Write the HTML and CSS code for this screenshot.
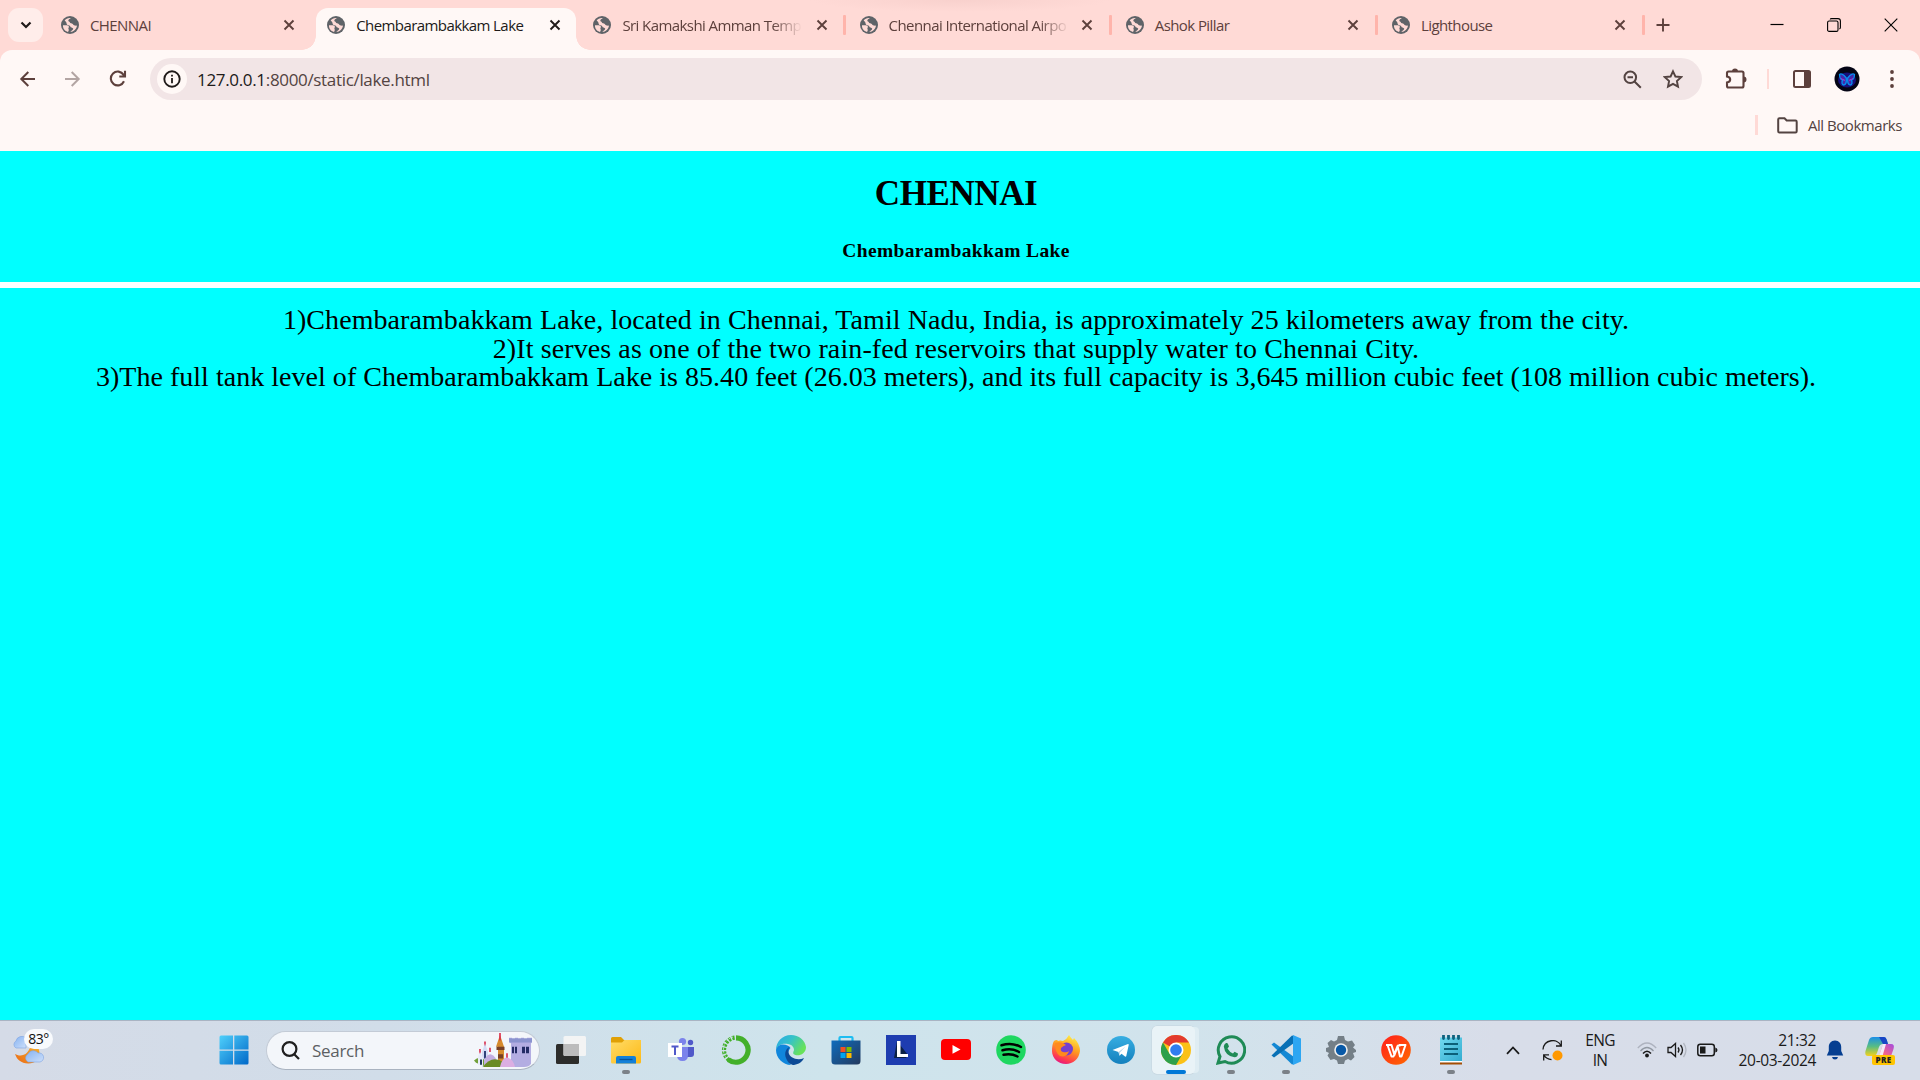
FILE: index.html
```html
<!DOCTYPE html>
<html lang="en">
<head>
<meta charset="utf-8">
<title>Chembarambakkam Lake</title>
<link rel="stylesheet" href="styles.css">
</head>
<body>
<svg class="defs" width="0" height="0">
  <defs>
    <symbol id="globe" viewBox="0 0 18 18"><circle cx="9" cy="9" r="9" fill="#5f6368"/><path d="M2 9.2C4.500 9.300 7 8.800 7.800 10.200C8.300 11.700 6.800 12 7.600 13.200C8.200 14.300 7.300 15.200 7 15.900C4 15.200 1.700 12.500 2 9.200ZM9.800 2.200C8.500 3 7.300 3.400 7.300 4.600C7.400 5.800 8.500 5.300 8.800 6.300C9 7.700 10.900 7 11.800 8C12.500 9 13.500 9.800 16 9.600C15.700 13.200 12.700 16 9.300 16C10.500 14.500 12.300 14.400 12.200 12.600C11.500 11.500 9.600 12 9.300 10.600C9.200 9.300 8 9.200 6.500 8.900C5.300 8.300 5.800 6.700 4.900 5.800C4.400 5.300 3.900 5 3.600 4.600C5 2.800 7.300 1.800 9.800 2.200Z" fill="#ffdad6"/></symbol>
    <symbol id="x" viewBox="0 0 12 12"><path d="M1.500 1.500L10.500 10.500M10.500 1.500L1.500 10.500" fill="none" stroke="currentColor" stroke-width="1.900"/></symbol>
    <linearGradient id="win" x1="0" y1="0" x2="1" y2="1"><stop offset="0" stop-color="#4fd0fb"/><stop offset="1" stop-color="#0068c8"/></linearGradient>
    <linearGradient id="fold" x1="0" y1="0" x2="1" y2="1"><stop offset="0" stop-color="#ffdc68"/><stop offset="1" stop-color="#fdb915"/></linearGradient>
    <linearGradient id="edgeTop" x1="0" y1="0" x2="1" y2=".5"><stop offset="0" stop-color="#2aa9e8"/><stop offset=".5" stop-color="#35c2c8"/><stop offset="1" stop-color="#68e25a"/></linearGradient>
    <linearGradient id="store" x1="0" y1="0" x2="1" y2="1"><stop offset="0" stop-color="#0f6cbd"/><stop offset="1" stop-color="#243a5e"/></linearGradient>
    <linearGradient id="fox" x1=".7" y1="0" x2=".3" y2="1"><stop offset="0" stop-color="#fff14a"/><stop offset=".45" stop-color="#ff9a1f"/><stop offset=".8" stop-color="#ff3d4d"/><stop offset="1" stop-color="#e31587"/></linearGradient>
    <linearGradient id="tg" x1="0" y1="0" x2="0" y2="1"><stop offset="0" stop-color="#37aee2"/><stop offset="1" stop-color="#1480bd"/></linearGradient>
    <linearGradient id="wps" x1="0" y1="0" x2="1" y2="1"><stop offset="0" stop-color="#ff1d1d"/><stop offset="1" stop-color="#ff6a00"/></linearGradient>
    <linearGradient id="note" x1="0" y1="0" x2="1" y2="1"><stop offset="0" stop-color="#72daf0"/><stop offset="1" stop-color="#33acd0"/></linearGradient>
    <linearGradient id="cloud" x1="0" y1="0" x2="1" y2="1"><stop offset="0" stop-color="#86b3f2"/><stop offset="1" stop-color="#cddffa"/></linearGradient>
    <linearGradient id="cop1" x1="0" y1="0" x2="0" y2="1"><stop offset="0" stop-color="#1b8fe8"/><stop offset=".5" stop-color="#58bd83"/><stop offset="1" stop-color="#f5d21c"/></linearGradient>
    <linearGradient id="cop2" x1="1" y1="0" x2="0" y2="1"><stop offset="0" stop-color="#a34be0"/><stop offset=".6" stop-color="#f2648c"/><stop offset="1" stop-color="#ff9b50"/></linearGradient>
    <linearGradient id="moon" x1="1" y1="0" x2="0" y2="1"><stop offset="0" stop-color="#f9b82c"/><stop offset="1" stop-color="#ea6a16"/></linearGradient>
  </defs>
</svg>

<header class="tabstrip">
  <button class="tab-search"><svg width="12" height="8" viewBox="0 0 12 8"><path d="M1.500 1.500L6 6L10.500 1.500" fill="none" stroke="#201a19" stroke-width="2.200"/></svg></button>
  <div class="tab"><svg class="fav"><use href="#globe"/></svg><span class="title">CHENNAI</span><svg class="close"><use href="#x"/></svg></div>
  <div class="tab active"><svg class="fav"><use href="#globe"/></svg><span class="title">Chembarambakkam Lake</span><svg class="close"><use href="#x"/></svg></div>
  <div class="tab sep"><svg class="fav"><use href="#globe"/></svg><span class="title fade">Sri Kamakshi Amman Temp</span><svg class="close"><use href="#x"/></svg></div>
  <div class="tab sep"><svg class="fav"><use href="#globe"/></svg><span class="title fade">Chennai International Airpo</span><svg class="close"><use href="#x"/></svg></div>
  <div class="tab sep"><svg class="fav"><use href="#globe"/></svg><span class="title">Ashok Pillar</span><svg class="close"><use href="#x"/></svg></div>
  <div class="tab sep"><svg class="fav"><use href="#globe"/></svg><span class="title">Lighthouse</span><svg class="close"><use href="#x"/></svg></div>
  <svg class="plus" width="14" height="14" viewBox="0 0 14 14"><path d="M7 .5V13.500M.5 7H13.500" stroke="#5d403c" stroke-width="1.900"/></svg>
  <div class="window-buttons">
    <svg width="14" height="14" viewBox="0 0 14 14"><path d="M.5 6.500H13.500" stroke="#000" stroke-width="1.200"/></svg>
    <svg width="14" height="14" viewBox="0 0 14 14" fill="none" stroke="#000" stroke-width="1.100"><rect x=".6" y="3" width="10.400" height="10.400" rx="1.500"/><path d="M3.200 1.500Q3.400 .6 4.500 .6H11Q13.400 .6 13.400 3V9.500Q13.400 10.600 12.400 10.900"/></svg>
    <svg width="14" height="14" viewBox="0 0 14 14"><path d="M.7 .7L13.300 13.300M13.300 .7L.7 13.300" stroke="#000" stroke-width="1.100"/></svg>
  </div>
</header>

<nav class="toolbar">
  <svg class="back" width="18" height="18" viewBox="0 0 18 18"><path d="M16 9H2.500M9.300 2L2.300 9L9.300 16" fill="none" stroke="#5d403c" stroke-width="2"/></svg>
  <svg class="forward" width="18" height="18" viewBox="0 0 18 18"><path d="M1 9H14.500M7.700 2L14.700 9L7.700 16" fill="none" stroke="#b3a5a3" stroke-width="2"/></svg>
  <svg class="reload" width="18" height="18" viewBox="0 0 18 18"><path d="M15 11.300A6.900 6.900 0 1 1 14.600 4.900L16 6.500M16 .8V6.500H10.300" fill="none" stroke="#5d403c" stroke-width="2.100"/></svg>
  <div class="omnibox">
    <span class="info"><svg width="18" height="18" viewBox="0 0 18 18"><circle cx="9" cy="9" r="7.700" fill="none" stroke="#201a19" stroke-width="1.900"/><path d="M9 8V13.200M9 4.800V6.600" stroke="#201a19" stroke-width="1.800"/></svg></span>
    <span class="url"><span class="host">127.0.0.1</span>:8000/static/lake.html</span>
    <svg class="lens" width="19" height="19" viewBox="0 0 19 19" fill="none" stroke="#534341" stroke-width="2"><circle cx="7.300" cy="7.300" r="5.800"/><path d="M11.500 11.500L17.800 17.800M4.500 7.300H10"/></svg>
    <svg width="20" height="20" viewBox="0 0 20 20"><path d="M10 2.300L12.400 7.500L18.100 8.100L13.900 12L15 17.600L10 14.800L5 17.600L6.100 12L1.900 8.100L7.600 7.500Z" fill="none" stroke="#534341" stroke-width="1.900"/></svg>
  </div>
  <svg class="puzzle" width="22" height="22" viewBox="0 0 22 22"><path d="M3.500 3.500H17Q18.500 3.500 18.500 5V18Q18.500 19.500 17 19.500H3.500Q2 19.500 2 18V14.500Q5.200 14 5.200 11.500T2 8.500V5Q2 3.500 3.500 3.500Z" fill="none" stroke="#5d403c" stroke-width="2.100"/><path d="M7 3.500A3 3 0 0 1 13 3.500ZM18.500 8.500A3 3 0 0 1 18.500 14.500Z" fill="#5d403c"/></svg>
  <i class="rule"></i>
  <svg class="panel" width="18" height="18" viewBox="0 0 18 18"><rect x="1" y="1" width="16" height="16" rx="1.500" fill="none" stroke="#5d403c" stroke-width="2"/><path d="M11 1H17V17H11Z" fill="#5d403c"/></svg>
  <svg class="avatar" width="26" height="26" viewBox="0 0 26 26"><circle cx="13" cy="13" r="12.500" fill="#040414"/><ellipse cx="13" cy="14" rx="9" ry="7.500" fill="#17107a"/><path d="M12.300 12C9 7.500 6.500 7.500 5.500 8.500C5.600 12 7 14 9 14C7 16 8 19 10 19C11.500 18.500 12.300 17 12.300 15ZM13.700 12C17 7.500 19.500 7.500 20.500 8.500C20.400 12 19 14 17 14C19 16 18 19 16 19C14.500 18.500 13.700 17 13.700 15Z" fill="#4528aa" stroke="#078ff0" stroke-width="1.300"/><path d="M7 12.500L11 14.500M19 12.500L15 14.500" stroke="#b32bc6"/></svg>
  <svg width="4" height="18" viewBox="0 0 4 18" fill="#5d403c"><circle cx="2" cy="2" r="1.900"/><circle cx="2" cy="9" r="1.900"/><circle cx="2" cy="16" r="1.900"/></svg>
</nav>

<div class="bookmarks">
  <i class="rule"></i>
  <svg width="21" height="17" viewBox="0 0 21 17"><path d="M2.500 1.200H7.500L9.700 3.500H18.500Q19.700 3.500 19.700 4.800V14.200Q19.700 15.600 18.500 15.600H2.500Q1.200 15.600 1.200 14.200V2.500Q1.200 1.200 2.500 1.200Z" fill="none" stroke="#534341" stroke-width="2"/></svg>
  <span>All Bookmarks</span>
</div>

<main class="page">
  <div class="masthead">
    <h1>CHENNAI</h1>
    <h3>Chembarambakkam Lake</h3>
  </div>
  <div class="facts">
    <p class="distance">1)Chembarambakkam Lake, located in Chennai, Tamil Nadu, India, is approximately 25 kilometers away from the city.</p>
    <p class="supply">2)It serves as one of the two rain-fed reservoirs that supply water to Chennai City.</p>
    <p class="capacity">3)The full tank level of Chembarambakkam Lake is 85.40 feet (26.03 meters), and its full capacity is 3,645 million cubic feet (108 million cubic meters).</p>
  </div>
</main>

<footer class="taskbar">
  <div class="weather">
    <svg width="34" height="34" viewBox="0 0 34 34"><path d="M3 21C8 24 17 24 20 8C31 14 30 31 16 30.500C9 30 5 27 3 21Z" fill="url(#moon)"/><path d="M4 15A4 4 0 0 1 4 8A6 6 0 0 1 14 5V15Z" fill="url(#cloud)" stroke="#7fa5e0" stroke-width=".6"/><path d="M16 29A4.500 4.500 0 0 1 16 21A6 6 0 0 1 26 20A4.500 4.500 0 0 1 28 29Z" fill="url(#cloud)" stroke="#7fa5e0" stroke-width=".6"/></svg>
    <span class="temp">83°</span>
  </div>
  <svg class="start" width="30" height="30" viewBox="0 0 30 30" fill="url(#win)"><path d="M2 .5H14V14.500H.5V2Q.5 .5 2 .5ZM15.300 .5H28Q29.500 .5 29.500 2V14.500H15.300ZM.5 15.700H14V29.500H2Q.5 29.500 .5 28ZM15.300 15.700H29.500V28Q29.500 29.500 28 29.500H15.300Z"/></svg>
  <div class="search">
    <svg width="19" height="19" viewBox="0 0 19 19" fill="none" stroke="#1f1f1f" stroke-width="2.200"><circle cx="8.500" cy="8" r="6.900"/><path d="M13 13L18 18"/></svg>
    <span>Search</span>
    <svg class="castle" width="60" height="35" viewBox="0 0 60 33" preserveAspectRatio="none"><path d="M35 8V4.500H38V7H41V4.500H44V7H47V4.500H50V7H53V4.500H58V8L57 10V29Q55 32 50 32H37V10Z" fill="#b3ade2"/><path d="M35 5H58V9H35Z" fill="#8b94cf"/><path d="M38 13h2v6h-2zM41 13h2v6h-2zM48 13h3v6h-3zM52 13h3v6h-3z" fill="#232c66"/><path d="M24 32V13H22L26 2L30 13V32Z" fill="#d58a2c"/><path d="M22.500 13H30.500V16H22.500ZM24 20H29V24H24Z" fill="#774025"/><path d="M26 0V7M11 8V14M16 14V18M6 15V20M33 19V24" stroke="#d92b4a" stroke-width="1.600"/><path d="M8 32V18L11 10L14 18V32Z" fill="#d4dcf5"/><path d="M10 17h2v7h-2z" fill="#304278"/><path d="M0 26Q5 21 10 25V31L2 28Z" fill="#72a03a"/><path d="M10 32V26Q16 14 23 26V32Z" fill="#c3aee0"/><path d="M9 32Q18 20 30 28V32Z" fill="#698b24"/><path d="M26 32Q28 23 33 23Q39 24 41 32Z" fill="#dbaee2"/><path d="M4 30V22L6 18L9 23V31Z" fill="#e8ecfa"/><path d="M6 25h2v5h-2z" fill="#1e355e"/></svg>
  </div>
  <div class="apps">
    <div class="app"><svg viewBox="0 0 30 30"><rect x="0" y="9" width="23" height="20" rx="1.500" fill="#2d2d2b"/><rect x="7.500" y="1" width="22.500" height="20" rx="1.500" fill="#f4f4f4" opacity=".95"/><path d="M7.500 9H23V21H9Q7.500 21 7.500 19.500Z" fill="#bcbcbc"/></svg></div>
    <div class="app run"><svg viewBox="0 0 30 30"><path d="M0 3.500Q0 2 1.500 2H10L13 5H30V12H0Z" fill="#e0a006"/><path d="M0 7.500H11L13.500 5H30V27Q30 28.500 28.500 28.500H1.500Q0 28.500 0 27Z" fill="url(#fold)"/><path d="M5 28.500V23Q5 21 7 21H23Q25 21 25 23V28.500Z" fill="#1380d8"/><path d="M8.500 24.500H21.500" stroke="#07539a" stroke-width="1.300"/></svg></div>
    <div class="app"><svg viewBox="0 0 30 30"><circle cx="16.500" cy="6.500" r="3.600" fill="#7b83eb"/><circle cx="24.500" cy="7.500" r="2.700" fill="#5059c9"/><path d="M20 12H28V19Q28 22 25 22H20Z" fill="#5059c9"/><path d="M11 12H22V20Q22 26 16.500 26T11 20Z" fill="#7b83eb"/><rect x="2" y="8" width="14" height="14" fill="#fff"/><path d="M5.500 11.500H12.500M9 11.500V20" stroke="#5059c9" stroke-width="2"/></svg></div>
    <div class="app"><svg viewBox="0 0 30 30" fill="none" stroke="#43b02a"><path d="M15 2.800A12.200 12.200 0 1 1 7.500 24.700" stroke-width="5.200"/><path d="M8 25A12.500 12.500 0 0 1 14 2.600" stroke-width="4.200" stroke-dasharray="2.500 1.300"/><path d="M5.500 23A13 13 0 0 1 12 2" stroke="#d0e2ec" stroke-width="1" stroke-dasharray="2 1"/></svg></div>
    <div class="app"><svg viewBox="0 0 30 30"><path d="M15 0C6 0 0 7 0 15C2 9 8 8 12 9C17 10 18 13 18 15C18 16 16.500 17.500 17.500 19C21 22 30 20 30 12C29 5 23 0 15 0Z" fill="url(#edgeTop)"/><path d="M0 15C0 23 7 30 15 30C11 26 10 18 14.500 13C12 9 2 7 0 15Z" fill="#1086dc"/><path d="M14.500 11.500C10 13 8 18 10 23C12 28 15 30 18 30C23 29 26 27 28 23C22 26 13 23 12.500 17C12 14 13 12 14.500 11.500Z" fill="#0c4a96"/></svg></div>
    <div class="app"><svg viewBox="0 0 30 30"><path d="M8.500 7V3Q8.500 2 9.500 2H20.500Q21.500 2 21.500 3V7" fill="none" stroke="#1dbdf1" stroke-width="2.200"/><path d="M.5 5.500H29.500V26Q29.500 29.500 26 29.500H4Q.5 29.500 .5 26Z" fill="url(#store)"/><path d="M9.500 12h5v5h-5z" fill="#f25022"/><path d="M15.500 12h5v5h-5z" fill="#7fba00"/><path d="M9.500 18h5v5h-5z" fill="#00a4ef"/><path d="M15.500 18h5v5h-5z" fill="#ffb900"/></svg></div>
    <div class="app"><svg viewBox="0 0 30 30"><path d="M0 0H30V30H0Z" fill="#1e3db0"/><path d="M11 6L8 23L20 23L22 20Z" fill="#0b2045"/><path d="M11 6H14.500V19H22V22H11Z" fill="#fff"/></svg></div>
    <div class="app"><svg viewBox="0 0 30 30"><rect y="4" width="30" height="21" rx="4" fill="#f00"/><path d="M11.500 10L19.500 14.500L11.500 18.800Z" fill="#fff"/></svg></div>
    <div class="app"><svg viewBox="0 0 30 30"><circle cx="15" cy="15" r="14.800" fill="#1ed760"/><path d="M5.500 10.300Q16 7 25 12M6.500 15.300Q15.500 12.500 23 17M7.500 19.800Q15 18 21.500 21.500" fill="none" stroke="#000" stroke-width="2.500" stroke-linecap="round"/></svg></div>
    <div class="app"><svg viewBox="0 0 30 30"><path d="M3 6Q6 4 7 6Q9 5 12 6Q16 4 18 0Q20 3 22 5L23 3Q29 9 29 16C28 24 22 29 15 29C7 29 1 23 1 16Q1 9 3 6Z" fill="url(#fox)"/><circle cx="15.500" cy="14" r="6.500" fill="#7540d0"/><path d="M4 8Q11 6 15 10Q12 11 10 13Q9 16 12 17Q16 18 18 16Q16 23 9 21Q4 18 4 8Z" fill="#ff8a1c"/></svg></div>
    <div class="app"><svg viewBox="0 0 30 30"><circle cx="15" cy="15" r="14" fill="url(#tg)"/><path d="M6.500 15L22 9Q23 9 22.700 10L20.300 21Q20 22 19 21.500L15.500 18.700L13.500 20.800L12.500 17Z" fill="#fff"/><path d="M12.500 17L19.500 11.500L14 17.500L13.500 20.800Z" fill="#b8d6ea"/></svg></div>
    <div class="app current"><svg viewBox="0 0 30 30"><circle cx="15" cy="15" r="15" fill="#fbc116"/><path d="M15 15L2 7.500A15 15 0 0 1 28 7.500H15Z" fill="#e33b2e"/><path d="M2 7.500A15 15 0 0 0 15 30L21.500 18.800L8.500 18.800Z" fill="#2da04b"/><circle cx="15" cy="15" r="7.500" fill="#fff"/><circle cx="15" cy="15" r="5.800" fill="#2f7df0"/></svg></div>
    <div class="app run"><svg viewBox="0 0 30 30"><path d="M2 28L4 21.500A13.200 13.200 0 1 1 9 26.500Z" fill="none" stroke="#1f8b56" stroke-width="3"/><path d="M10 8Q11.500 7.500 12 9L13 11.500L11.500 13.500Q13.500 17 17 18.500L18.500 16.800L22 18.500Q22 22 18.500 22.300Q9 21 7.800 11.500Q8 9 10 8Z" fill="#1f8b56"/></svg></div>
    <div class="app run"><svg viewBox="0 0 30 30"><path d="M.5 9.500L3 7.500L23 22V29L21 29.500Z" fill="#1388d4"/><path d="M.5 20.500L3 22.500L23 8V1L21 .5Z" fill="#0870b5"/><path d="M22 0L30 3.500V26.500L22 30Z" fill="#2da6f2"/></svg></div>
    <div class="app"><svg viewBox="0 0 30 30"><path d="M12 1H18L19 5L22 6.500L26 5.500L29 10L27 12.500L30 15V17L27 18L28.500 22L25 25.500L22 24L19 25.500L18 29H12L11 25.500L8 24L4.500 25L1.500 20.500L3 18L0 16.500V13L3 12L1.500 8L5 5L8 6.500L11 5Z" fill="#747f87"/><circle cx="15" cy="15" r="6.800" fill="#eee"/><circle cx="15" cy="15" r="5.200" fill="#0859a7"/></svg></div>
    <div class="app"><svg viewBox="0 0 30 30"><circle cx="15" cy="15" r="14.800" fill="url(#wps)"/><path d="M5 10H10.500L13.500 20L17 10.500H19.500M6.500 10L10.500 21.500H12.500L16.500 11L19 21.500H20.500L24.500 10H18" fill="none" stroke="#fff" stroke-width="2" stroke-linejoin="round"/></svg></div>
    <div class="app run"><svg viewBox="0 0 30 30"><path d="M4 2.500H26V26H4Z" fill="url(#note)"/><path d="M4 26H26V27.500H4Z" fill="#fff"/><path d="M4 27.500H26V29.500H4Z" fill="#a34e05"/><path d="M8 9H22M8 14H22M8 19H22" stroke="#0b6079" stroke-width="1.800"/><path d="M7.500 .5V3.500M12.500 .5V3.500M17.500 .5V3.500M22.500 .5V3.500" stroke="#0d627e" stroke-width="2.800" stroke-linecap="round"/></svg></div>
  </div>
  <div class="tray">
    <svg class="chev" width="14" height="9" viewBox="0 0 14 9"><path d="M1 7.800L7 1.500L13 7.800" fill="none" stroke="#1a1a1a" stroke-width="1.800"/></svg>
    <svg class="sync" width="21" height="21" viewBox="0 0 21 21"><path d="M1 9.500C2 -1 15.500 -2 18.800 5.500M19.300 .5V6H14M7 14.800H1.700V20.500M1.800 15.200Q4.500 19.300 9.500 19.600" fill="none" stroke="#1a1a1a" stroke-width="1.300"/><circle cx="15.500" cy="15.500" r="5" fill="#ff9800"/></svg>
    <div class="lang"><span>ENG</span><span>IN</span></div>
    <svg class="wifi" width="20" height="16" viewBox="0 0 20 16" fill="none"><path d="M.8 6Q10-4 19.200 6" stroke="#aeb3bf" stroke-width="1.300"/><path d="M3.500 9Q10 2 16.500 9" stroke="#9299a3" stroke-width="1.300"/><path d="M6 11.500Q10 7 14 11.500" stroke="#1a1a1a" stroke-width="1.500"/><circle cx="10" cy="13.500" r="1.900" fill="#1a1a1a"/></svg>
    <svg class="vol" width="20" height="16" viewBox="0 0 20 16" fill="none" stroke="#1a1a1a" stroke-width="1.300"><path d="M1 5.500H4L8.500 1.500V14.500L4 10.500H1Z"/><path d="M11 5.500Q13 8 11 10.500M13.500 3Q17.500 8 13.500 13"/><path d="M16.500 1Q21.500 8 16.500 15" stroke="#b2b7c1"/></svg>
    <svg class="bat" width="21" height="14" viewBox="0 0 21 14"><rect x=".8" y="1.300" width="16.500" height="11.400" rx="2.500" fill="none" stroke="#1a1a1a" stroke-width="1.500"/><path d="M3 3.500H8.500V10.500H3ZM18.300 4.500Q20.500 5 20.500 7T18.300 9.500Z" fill="#1a1a1a"/></svg>
    <div class="clock"><span>21:32</span><span>20-03-2024</span></div>
    <svg class="bell" width="18" height="20" viewBox="0 0 18 20" fill="#053e91"><path d="M9 .5C5 .5 2.800 3.500 2.800 7V11L.8 15.500H17.200L15.200 11V7C15.200 3.500 13 .5 9 .5ZM6 17H12Q11.500 19.500 9 19.500T6 17Z"/></svg>
    <div class="copilot">
      <svg width="30" height="28" viewBox="0 0 30 28"><path d="M8 1H19Q21 1 21.800 4L23 8H18Q15 8 14 11L12 17Q11 20 8 20H3Q-.5 20 .5 15L4 4Q5 1 8 1Z" fill="url(#cop1)"/><path d="M14 1H19Q21 1 21.800 4L23 8H18Z" fill="#1846c5"/><path d="M20 8H26Q30 8 28.500 13L26 20Q25 22 22 22H11L14 20L17 11Q18 8 20 8Z" fill="url(#cop2)"/><path d="M15 17L18 8H21L17.500 20H13Q14.500 19 15 17Z" fill="#f4eaf8"/></svg>
      <span class="pre">PRE</span>
    </div>
  </div>
</footer>
</body>
</html>
```
FILE: styles.css
```css
* { box-sizing: border-box; }
html, body { height: 100%; }
body {
  margin: 0;
  display: flex;
  flex-direction: column;
  overflow: hidden;
  background: #fff8f6;
  font-family: "Open Sans", "Noto Sans", sans-serif;
}
svg { display: block; flex: none; }
.defs { position: absolute; }

/* Tab strip */
.tabstrip {
  height: 50px;
  flex: none;
  display: flex;
  align-items: center;
  padding-left: 8px;
  background: radial-gradient(150px 12px at 960px 0, #f8d1cd, #ffdad6);
}
.tab-search {
  width: 35px;
  height: 34px;
  margin-right: 7px;
  padding: 0;
  border: 0;
  border-radius: 11px;
  background: #ffedea;
  display: flex;
  align-items: center;
  justify-content: center;
}
.tab {
  position: relative;
  width: 266.2px;
  height: 42px;
  margin-top: 8px;
  padding: 0 21.500px 8px 11px;
  display: flex;
  align-items: center;
  color: #5d403c;
}
.fav { width: 18px; height: 18px; }
.title {
  flex: 1;
  margin-left: 11px;
  font-size: 15px;
  letter-spacing: -.58px;
  line-height: 22px;
  white-space: nowrap;
}
.fade {
  -webkit-mask-image: linear-gradient(90deg, #000 150px, transparent 180px);
  mask-image: linear-gradient(90deg, #000 150px, transparent 180px);
}
.close { width: 12px; height: 12px; margin-left: 15px; }
.active { color: #201a19; z-index: 0; }
.active::before {
  content: "";
  position: absolute;
  z-index: -1;
  top: 0;
  bottom: 0;
  left: 0;
  width: 260px;
  border-radius: 12px 12px 0 0;
  background: #fff8f6;
}
.active::after {
  content: "";
  position: absolute;
  z-index: -1;
  bottom: 0;
  left: -14px;
  width: 288px;
  height: 14px;
  background:
    radial-gradient(circle at 0 0, transparent 13.500px, #fff8f6 14px) left / 14px 14px no-repeat,
    radial-gradient(circle at 100% 0, transparent 13.500px, #fff8f6 14px) right / 14px 14px no-repeat;
}
.sep::after {
  content: "";
  position: absolute;
  right: 2.500px;
  top: 7px;
  width: 3px;
  height: 20px;
  border-radius: 1px;
  background: #ffb4ab;
}
.plus { margin-left: 9px; }
.window-buttons { display: flex; gap: 43px; margin-left: auto; padding-right: 22px; }

/* Toolbar */
.toolbar {
  height: 58px;
  flex: none;
  display: flex;
  align-items: center;
  padding-left: 19px;
  background: linear-gradient(#ffdad6, #ffdad6) top / 100% 14px no-repeat;
  position: relative;
  z-index: 0;
}
.toolbar::before {
  content: "";
  position: absolute;
  z-index: -1;
  inset: 0;
  border-radius: 12px 12px 0 0;
  background: #fff8f6;
}
.forward { margin-left: 27px; }
.reload { margin-left: 27px; }
.omnibox {
  width: 1552px;
  height: 42px;
  margin-left: 23px;
  padding: 0 19px 0 7px;
  border-radius: 21px;
  background: #f2e5e6;
  display: flex;
  align-items: center;
}
.info {
  width: 30px;
  height: 30px;
  border-radius: 50%;
  background: #fff8f6;
  display: flex;
  align-items: center;
  justify-content: center;
}
.url { margin-left: 10px; font-size: 17px; letter-spacing: -.33px; color: #534341; }
.host { color: #201a19; }
.lens { margin-left: auto; margin-right: 21px; }
.puzzle { margin-left: 23px; }
.rule { width: 2px; height: 20px; background: #ffdad6; }
.toolbar .rule { margin: 0 24px 0 20px; }
.avatar { margin: 0 30px 0 23px; }

.bookmarks {
  height: 43px;
  flex: none;
  display: flex;
  align-items: center;
  justify-content: flex-end;
  padding: 0 18px 9px 0;
  color: #534341;
  font-size: 15px;
  letter-spacing: -.45px;
}
.bookmarks .rule { width: 3px; }
.bookmarks svg { margin: 0 10px 0 19px; }

/* Page */
.page {
  flex: 1;
  display: flex;
  flex-direction: column;
  background: #fff;
  color: #000;
  font-family: "Liberation Serif", serif;
  text-align: center;
}
.masthead { height: 131px; padding: 23px 8px 0 0; background: #0ff; }
h1 { margin: 0; font-size: 35px; line-height: 40px; letter-spacing: -.4px; }
h3 { margin: 26px 0 0; font-size: 19.500px; line-height: 22px; letter-spacing: .35px; }
.facts { flex: 1; margin-top: 6px; padding: 18px 8px 0 0; background: #0ff; }
.facts p { margin: 0; font-size: 28px; line-height: 28.500px; white-space: nowrap; }
.distance { letter-spacing: .075px; }
.facts .supply { letter-spacing: .1px; line-height: 28px; }
.capacity { letter-spacing: .027px; }

/* Taskbar */
.taskbar {
  height: 60px;
  flex: none;
  display: flex;
  align-items: center;
  padding-bottom: 1px;
  border-top: 1px solid #a9b4c3;
  background: linear-gradient(90deg, #d5dbe7 0, #d1dde9 20%, #cee4ec 43%, #d1e3ec 62%, #d8dde9 78%, #d7dde9 100%);
}
.weather { position: relative; width: 53px; padding-left: 12px; }
.temp {
  position: absolute;
  left: 24px;
  top: -4px;
  width: 29px;
  height: 20px;
  border-radius: 10px;
  background: #f8fafd;
  font-size: 14px;
  line-height: 20px;
  letter-spacing: -.5px;
  text-align: center;
  color: #111;
}
.start { margin-left: 166px; }
.search {
  width: 274px;
  height: 39px;
  margin-left: 17px;
  padding: 0 5px 0 14px;
  border: 1px solid #c3cbd6;
  border-bottom-color: #a9b3c0;
  border-radius: 20px;
  background: #f3f6fa;
  display: flex;
  align-items: center;
  color: #5c5f63;
  font-size: 17px;
  letter-spacing: -.3px;
}
.search span { margin-left: 12px; }
.castle { margin-left: auto; }
.apps { display: flex; margin-left: 3px; }
.app {
  position: relative;
  width: 55px;
  height: 48px;
  display: flex;
  align-items: center;
  justify-content: center;
  z-index: 0;
}
.app svg { width: 30px; height: 30px; }
.run::after, .current::after {
  content: "";
  position: absolute;
  bottom: 0;
  width: 8px;
  height: 4px;
  border-radius: 2px;
  background: #7b8188;
}
.current::after { width: 20px; background: #0078d7; }
.current::before {
  content: "";
  position: absolute;
  z-index: -1;
  left: 4px;
  top: 0;
  width: 43px;
  height: 48px;
  border-radius: 5px;
  background: #e9f3f7;
  box-shadow: 5px 0 0 -1px #dfedf3, 0 0 0 .5px #c4d3dd;
}
.tray { display: flex; align-items: center; margin-left: 28px; color: #1a1a1a; font-size: 15.500px; letter-spacing: -.35px; }
.sync { margin-left: 22px; }
.lang, .clock { display: flex; flex-direction: column; line-height: 20px; }
.lang { width: 40px; margin-left: 17px; text-align: center; letter-spacing: -.7px; }
.wifi { margin-left: 17px; }
.vol { margin-left: 10px; }
.bat { margin-left: 10px; }
.clock { width: 90px; margin-left: 8px; text-align: right; }
.bell { margin-left: 10px; }
.copilot { position: relative; margin-left: 21px; }
.pre {
  position: absolute;
  left: 7px;
  bottom: -1px;
  width: 23px;
  height: 10px;
  border-radius: 2px;
  background: #ffc400;
  color: #222;
  font-size: 8px;
  font-weight: 800;
  line-height: 10px;
  letter-spacing: .4px;
  text-align: center;
}
```
